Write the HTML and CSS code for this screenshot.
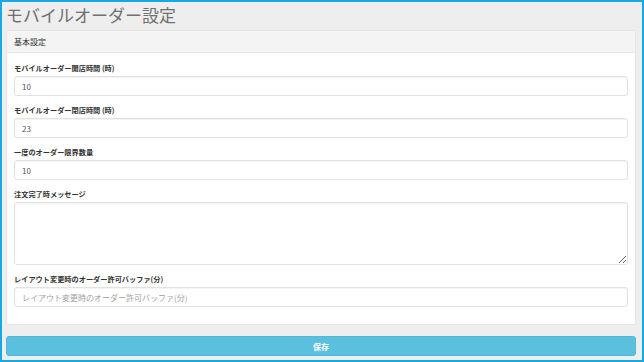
FILE: index.html
```html
<!DOCTYPE html>
<html lang="ja">
<head>
  <meta charset="UTF-8" />
  <meta name="viewport" content="width=device-width, initial-scale=1" />
  <title>モバイルオーダー設定</title>
  <link rel="stylesheet" href="styles.css">
</head>
<body>
  <div class="frame">
    <h1 class="page-title">モバイルオーダー設定</h1>

    <div class="panel">
      <div class="panel-heading">基本設定</div>
      <div class="panel-body">
        <div class="form-group">
          <label for="openHour">モバイルオーダー開店時間 (時)</label>
          <input type="text" id="openHour" class="form-control" value="10">
        </div>
        <div class="form-group">
          <label for="closeHour">モバイルオーダー閉店時間 (時)</label>
          <input type="text" id="closeHour" class="form-control" value="23">
        </div>
        <div class="form-group">
          <label for="maxQty">一度のオーダー限界数量</label>
          <input type="text" id="maxQty" class="form-control" value="10">
        </div>
        <div class="form-group">
          <label for="doneMsg">注文完了時メッセージ</label>
          <textarea id="doneMsg" class="form-control msg"></textarea>
        </div>
        <div class="form-group">
          <label for="buffer">レイアウト変更時のオーダー許可バッファ(分)</label>
          <input type="text" id="buffer" class="form-control" placeholder="レイアウト変更時のオーダー許可バッファ(分)">
        </div>
      </div>
    </div>

    <button class="btn-save">保存</button>
  </div>
</body>
</html>
```

FILE: styles.css
```css
* {
  box-sizing: border-box;
}

body {
  margin: 0;
  background: #fff;
  font-family: "Noto Sans CJK JP", "Noto Sans", sans-serif;
  color: #333;
}

.frame {
  width: 644px;
  height: 362px;
  border: 2px solid #17a9e3;
  background: #eeeeee;
  padding: 0 6px 0 4px;
  overflow: hidden;
}

.page-title {
  margin: 0;
  font-size: 17px;
  line-height: 25px;
  font-weight: normal;
  color: #707070;
}

.panel {
  margin-top: 3px;
  background: #fff;
  border: 1px solid #e6e6e6;
  border-radius: 2px;
}

.panel-heading {
  height: 22px;
  line-height: 21px;
  padding: 0 7px;
  font-size: 8px;
  background: #f4f4f4;
  border-bottom: 1px solid #e8e8e8;
}

.panel-body {
  padding: 9px 7px 17px;
}

.form-group {
  margin-bottom: 8px;
}

.form-group:last-child {
  margin-bottom: 0;
}

.form-group label {
  display: block;
  font-size: 7.2px;
  line-height: 12px;
  font-weight: bold;
  margin-bottom: 2px;
}

.form-control {
  display: block;
  width: 100%;
  height: 20px;
  padding: 0 7px;
  font-family: inherit;
  font-size: 8px;
  color: #555;
  background: #fff;
  border: 1px solid #e2e2e2;
  border-radius: 3px;
  box-shadow: inset 0 1px 1px rgba(0, 0, 0, 0.05);
  outline: none;
}

.form-control::placeholder {
  color: #a0a0a0;
}

.msg {
  height: 63px;
  padding-top: 4px;
  resize: vertical;
}

.btn-save {
  display: block;
  width: 100%;
  height: 20px;
  margin-top: 11px;
  padding: 0;
  font-family: inherit;
  font-size: 8px;
  font-weight: bold;
  color: #fff;
  background: #5bc0de;
  border: 1px solid #4fb9d9;
  border-radius: 3px;
}
```
